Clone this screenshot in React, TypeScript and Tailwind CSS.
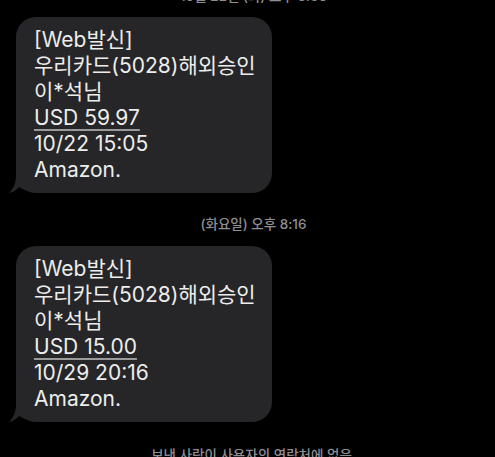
import React from "react"

const font = {
  fontFamily: 'Inter, "Noto Sans CJK KR", sans-serif',
}

function Tail() {
  return (
    <svg
      className="absolute -left-[8px] bottom-0"
      width="24"
      height="18"
      viewBox="0 0 24 18"
      fill="#262628"
    >
      <path d="M8 0 L24 0 L24 16 C18 16 14 14 11 12 C8 15 5 17.5 1 18 C5 14 8 9 8 0 Z" />
    </svg>
  )
}

function Bubble({ amount, date }: { amount: string; date: string }) {
  return (
    <div className="relative ml-4 w-[256px] rounded-[20px] bg-[#262628] px-[18px] py-[10px] text-[21px] leading-[26px] text-[#ededed]">
      <p>[Web발신]</p>
      <p className="whitespace-nowrap">우리카드(5028)해외승인</p>
      <p>이*석님</p>
      <p>
        <span className="underline decoration-[#9a9a9a] decoration-[1.5px] underline-offset-[4px]">
          {amount}
        </span>
      </p>
      <p>{date}</p>
      <p>Amazon.</p>
      <Tail />
    </div>
  )
}

export default function App() {
  return (
    <div
      className="flex h-[457px] w-[495px] flex-col overflow-hidden bg-black"
      style={font}
    >
      {/* cut-off date header */}
      <p className="-mt-[12px] h-[17px] pl-3 text-center text-[13.5px] font-medium leading-[17px] text-[#8e8e93]">
        10월 22일 (화) 오후 3:05
      </p>

      <div className="mt-[12px]">
        <Bubble amount="USD 59.97" date="10/22 15:05" />
      </div>

      <p className="mt-[23px] pl-3 text-center text-[13.5px] font-medium leading-[17px] text-[#8e8e93]">
        (화요일) 오후 8:16
      </p>

      <div className="mt-[13px]">
        <Bubble amount="USD 15.00" date="10/29 20:16" />
      </div>

      <p className="mt-[25px] pl-2 text-center text-[13.5px] font-medium leading-[17px] text-[#8e8e93]">
        보낸 사람이 사용자의 연락처에 없음
      </p>
    </div>
  )
}
